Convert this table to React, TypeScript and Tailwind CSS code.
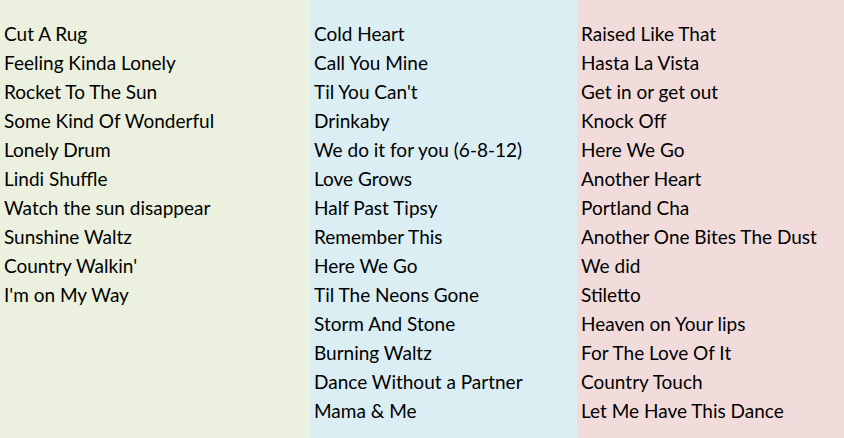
const columns: { bg: string; songs: string[] }[] = [
  {
    bg: "bg-[#ebf1de]",
    songs: [
      "Cut A Rug",
      "Feeling Kinda Lonely",
      "Rocket To The Sun",
      "Some Kind Of Wonderful",
      "Lonely Drum",
      "Lindi Shuffle",
      "Watch the sun disappear",
      "Sunshine Waltz",
      "Country Walkin'",
      "I'm on My Way",
    ],
  },
  {
    bg: "bg-[#daeef3]",
    songs: [
      "Cold Heart",
      "Call You Mine",
      "Til You Can't",
      "Drinkaby",
      "We do it for you (6-8-12)",
      "Love Grows",
      "Half Past Tipsy",
      "Remember This",
      "Here We Go",
      "Til The Neons Gone",
      "Storm And Stone",
      "Burning Waltz",
      "Dance Without a Partner",
      "Mama & Me",
    ],
  },
  {
    bg: "bg-[#f2dcdb]",
    songs: [
      "Raised Like That",
      "Hasta La Vista",
      "Get in or get out",
      "Knock Off",
      "Here We Go",
      "Another Heart",
      "Portland Cha",
      "Another One Bites The Dust",
      "We did",
      "Stiletto",
      "Heaven on Your lips",
      "For The Love Of It",
      "Country Touch",
      "Let Me Have This Dance",
    ],
  },
];

export default function App() {
  return (
    <div
      className="grid h-[438px] w-[844px] grid-cols-[310px_267px_267px] overflow-hidden text-[19px] text-black"
      style={{ fontFamily: "Lato, 'Open Sans', sans-serif" }}
    >
      {columns.map((col, i) => (
        <div key={i} className={`${col.bg} pl-1 pt-[20px]`}>
          {col.songs.map((s, j) => (
            <div key={j} className="flex h-[29px] items-center whitespace-nowrap">
              {s}
            </div>
          ))}
        </div>
      ))}
    </div>
  );
}
